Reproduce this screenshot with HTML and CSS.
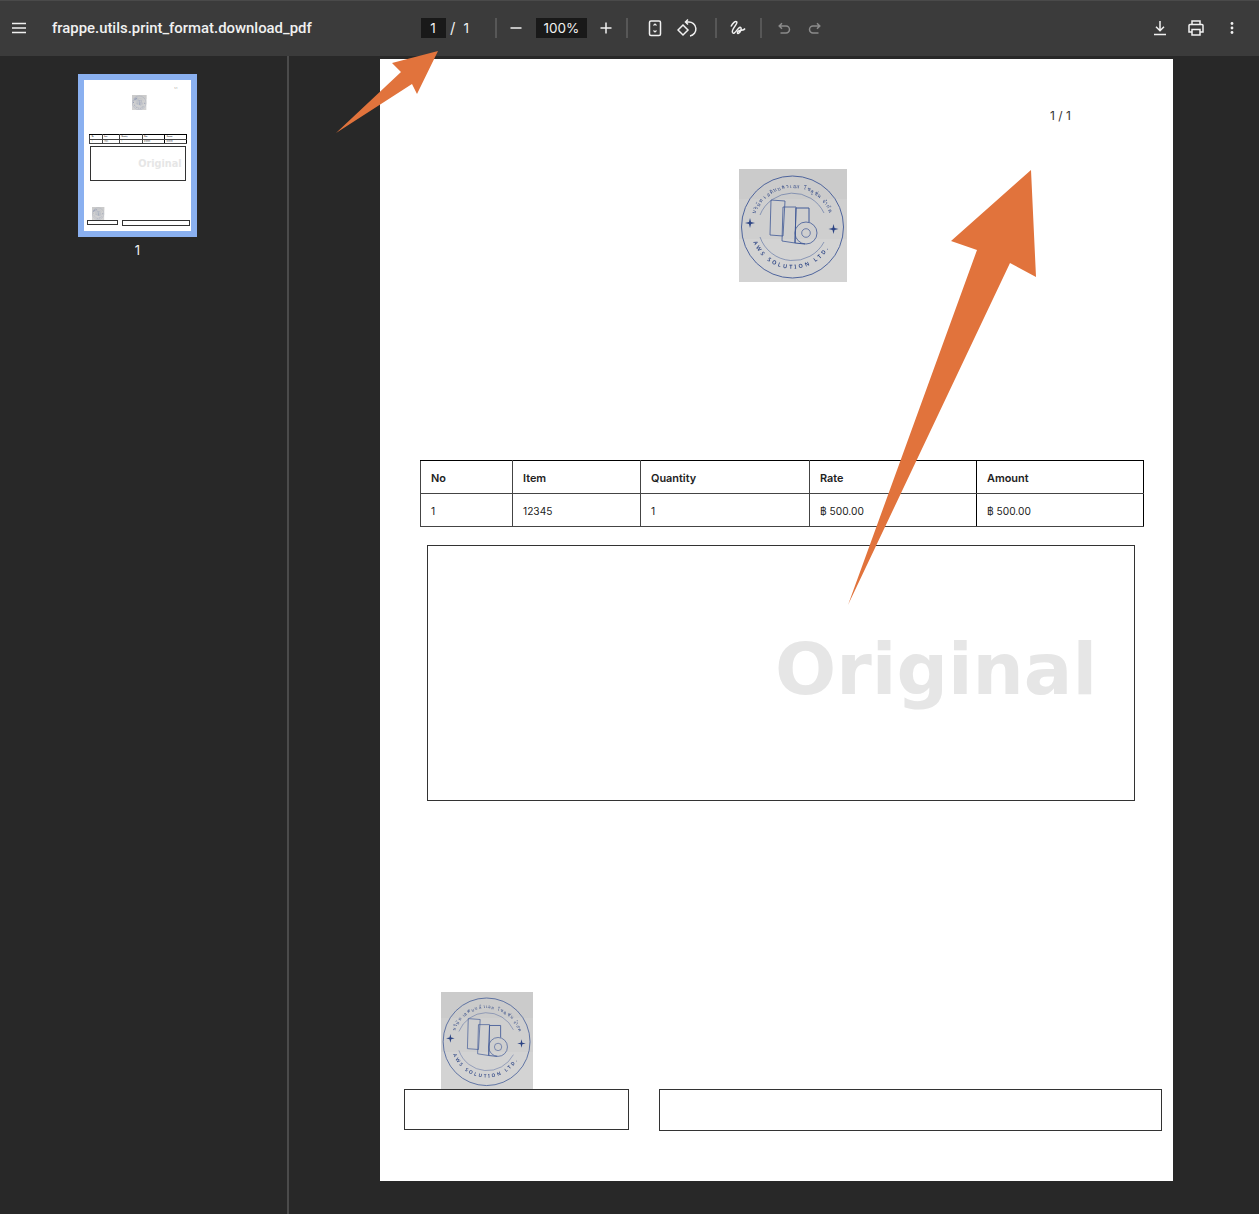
FILE: index.html
```html
<!DOCTYPE html>
<html>

<head>
    <title>frappe.utils.print_format.download_pdf</title>
    <link rel="stylesheet" href="styles.css">
</head>

<body>
    <svg class="defs">
        <symbol id="stamp" viewBox="0 0 108 113" preserveAspectRatio="none">
            <rect width="108" height="113" fill="#d3d3d3"></rect>
            <rect width="108" height="70" fill="#cfcfcf"></rect>
            <rect width="108" height="30" fill="#cbcbcb"></rect>
            <g fill="none" stroke="#3f5896">
                <circle cx="53.500" cy="58" r="51" stroke-width="0.9"></circle>
                <path d="M21 46 A35 35 0 0 1 85 44" stroke-width="0.5"></path>
                <path d="M21 68 A35 35 0 0 0 85 73" stroke-width="0.5"></path>
                <path d="M32 31 L46 32 L44 67 L31 66 Z" stroke-width="0.8"></path>
                <path d="M44 38 L57 38 L56 74 L43 72 Z" stroke-width="0.8"></path>
                <path d="M57 39 L70 39 L70 53 M57 39 L56 74 L66 75" stroke-width="1"></path>
                <circle cx="67" cy="64" r="11" stroke-width="0.8"></circle>
                <circle cx="67" cy="64" r="4.300" stroke-width="0.7"></circle>
            </g>
            <path d="M11 49 L12 53 L16 54 L12 55 L11 59 L10 55 L6 54 L10 53 Z" fill="#2c4484"></path>
            <path d="M94.500 55 L95.500 59 L99.500 60 L95.500 61 L94.500 65 L93.500 61 L89.500 60 L93.500 59 Z" fill="#2c4484"></path>
            <path id="stampTop" d="M16 46 A39.500 39.500 0 0 1 91 46" fill="none"></path>
            <path id="stampBottom" d="M14 72 A42 42 0 0 0 93 72" fill="none"></path>
            <text class="stamp-text"><textPath href="#stampTop" startOffset="1">บริษัท เอดับบลิวเอส โซลูชั่น จำกัด</textPath></text>
            <text class="stamp-text stamp-latin"><textPath href="#stampBottom" startOffset="1">AWS SOLUTION LTD.</textPath></text>
        </symbol>
    </svg>

    <div class="toolbar">
        <div class="tb-left">
            <svg class="icon" viewBox="0 0 20 20"><path d="M3 5.500h14M3 10h14M3 14.500h14"></path></svg>
            <span class="doc-title">frappe.utils.print_format.download_pdf</span>
        </div>
        <div class="tb-center">
            <span class="num-box page-box">1</span>
            <span class="slash">/</span>
            <span class="page-total">1</span>
            <span class="sep sep-a"></span>
            <svg class="icon" viewBox="0 0 20 20"><path d="M4.500 10h11"></path></svg>
            <span class="num-box zoom-box">100%</span>
            <svg class="icon" viewBox="0 0 20 20"><path d="M4.500 10h11M10 4.500v11"></path></svg>
            <span class="sep sep-b"></span>
            <svg class="icon fit" viewBox="0 0 20 20"><rect x="4.500" y="3" width="11" height="14.500" rx="1.500"></rect><path class="thin" d="M8.500 7.500 10 6l1.500 1.500M8.500 12.500 10 14l1.500-1.500"></path></svg>
            <svg class="icon rotate" viewBox="0 0 20 20"><path d="M6 7 1 12l5 5 5-5Z"></path><path d="M8.500 4h3a7 7 0 0 1 1.500 13.900M11 1.500 8.500 4 11 6.500"></path></svg>
            <span class="sep sep-c"></span>
            <svg class="icon draw" viewBox="0 0 20 20"><path d="M3 8.500C4.500 5 7.500 2.500 8.800 4 10 6 3 11 4.500 14.500 6 17.500 9.500 10.500 11.500 9.500 14 8.500 13.500 13 11 15 9.500 16.500 8.500 14 10.500 13 13 11.500 15.500 13 17 10.500"></path></svg>
            <span class="sep sep-d"></span>
            <svg class="icon muted undo" viewBox="0 0 20 20"><path d="M5.500 8h6.500a3.500 3.500 0 0 1 0 7H6.500M8 5.200 5.200 8 8 10.800"></path></svg>
            <svg class="icon muted" viewBox="0 0 20 20"><path d="M14.500 8H8a3.500 3.500 0 0 0 0 7h5.500M12 5.200 14.800 8 12 10.800"></path></svg>
        </div>
        <div class="tb-right">
            <svg class="icon" viewBox="0 0 20 20"><path d="M10 3v9.500M6 8.800l4 4 4-4M4 16.500h12"></path></svg>
            <svg class="icon" viewBox="0 0 20 20"><path d="M6 6.500V3h8v3.500M6 14H3V7.500a1 1 0 0 1 1-1h12a1 1 0 0 1 1 1V14h-3M6 11.500h8V17H6Z"></path></svg>
            <svg class="icon dots" viewBox="0 0 20 20"><circle cx="10" cy="5.500" r="1.400"></circle><circle cx="10" cy="10" r="1.400"></circle><circle cx="10" cy="14.500" r="1.400"></circle></svg>
        </div>
    </div>

    <div class="main">
        <div class="sidebar">
            <div class="thumb-frame">
                <div class="page thumb-page">
                    <div class="page-num">1 / 1</div>
                    <svg class="stamp stamp-lg"><use href="#stamp"></use></svg>
                    <table class="items">
                        <tr><th class="c-no">No</th><th class="c-item">Item</th><th class="c-qty">Quantity</th><th class="c-rate">Rate</th><th>Amount</th></tr>
                        <tr><td>1</td><td>12345</td><td>1</td><td>฿ 500.00</td><td>฿ 500.00</td></tr>
                    </table>
                    <div class="copy-box"><span class="copy-mark">Original</span></div>
                    <svg class="stamp stamp-sm"><use href="#stamp"></use></svg>
                    <div class="sign-row"><div class="sign-box"></div><div class="sign-box sign-wide"></div></div>
                </div>
            </div>
            <div class="thumb-label">1</div>
        </div>

        <div class="viewer">
            <div class="page">
                <div class="page-num">1 / 1</div>
                <svg class="stamp stamp-lg"><use href="#stamp"></use></svg>
                <table class="items">
                    <tr><th class="c-no">No</th><th class="c-item">Item</th><th class="c-qty">Quantity</th><th class="c-rate">Rate</th><th>Amount</th></tr>
                    <tr><td>1</td><td>12345</td><td>1</td><td>฿ 500.00</td><td>฿ 500.00</td></tr>
                </table>
                <div class="copy-box"><span class="copy-mark">Original</span></div>
                <svg class="stamp stamp-sm"><use href="#stamp"></use></svg>
                <div class="sign-row"><div class="sign-box"></div><div class="sign-box sign-wide"></div></div>
            </div>
        </div>
    </div>

    <svg class="arrows" viewBox="0 0 1259 1214">
        <polygon points="438,51 392,63 401,72 336,133 412,84 417,94"></polygon>
        <polygon points="1031,170 951,241 977,250 848,605 1010,263 1036,277"></polygon>
    </svg>
</body>

</html>
```

FILE: styles.css
```css
* {
    box-sizing: border-box;
}

body {
    margin: 0;
    height: 1214px;
    overflow: hidden;
    position: relative;
    background-color: #282828;
    font-family: "Inter", sans-serif;
    color: #fff;
}

.defs {
    display: none;
}

.toolbar {
    height: 56px;
    background-color: #3b3b3b;
    border-top: 1px solid #4a4a4a;
    padding-bottom: 2px;
    display: flex;
    align-items: center;
    position: relative;
}

.tb-left {
    width: 421px;
    display: flex;
    align-items: center;
    padding-left: 9px;
    gap: 23px;
}

.doc-title {
    font-family: "Roboto", sans-serif;
    font-size: 14.900px;
    font-weight: 500;
    white-space: nowrap;
    color: #f1f1f1;
}

.tb-center {
    display: flex;
    align-items: center;
}

.tb-right {
    margin-left: auto;
    padding-right: 17px;
    display: flex;
    gap: 16px;
}

.icon {
    width: 20px;
    height: 20px;
    fill: none;
    stroke: #f1f1f1;
    stroke-width: 1.500;
    flex: none;
}

.icon .thin {
    stroke-width: 1.100;
}

.icon.muted {
    stroke: #8b8b8b;
}

.icon.dots {
    fill: #f1f1f1;
    stroke: none;
}

.icon.fit {
    margin-left: 17px;
}

.icon.rotate {
    margin-left: 12px;
}

.icon.draw {
    margin-left: 11px;
}

.icon.undo {
    margin-left: 12px;
    margin-right: 11px;
}

.num-box {
    background-color: #191919;
    height: 20px;
    display: flex;
    align-items: center;
    justify-content: center;
    font-size: 13.500px;
    color: #f1f1f1;
}

.page-box {
    width: 25px;
    padding-right: 1px;
}

.zoom-box {
    width: 51px;
    margin: 0 9px 0 10px;
}

.slash {
    margin-left: 4px;
    font-size: 15px;
    color: #f1f1f1;
}

.page-total {
    margin-left: 8px;
    font-size: 13.500px;
    color: #f1f1f1;
}

.sep {
    width: 2px;
    height: 20px;
    background-color: #575757;
    flex: none;
}

.sep-a {
    margin-left: 26px;
    margin-right: 9px;
}

.sep-b {
    margin-left: 10px;
}

.sep-c {
    margin-left: 18px;
}

.sep-d {
    margin-left: 12px;
}

.main {
    display: flex;
    height: 1158px;
}

.sidebar {
    width: 289px;
    flex: none;
    border-right: 2px solid #4b4b4b;
    padding: 18px 0 0 78px;
}

.thumb-frame {
    width: 119px;
    height: 163px;
    border: 6px solid #8ab0f0;
    overflow: hidden;
}

.thumb-page {
    zoom: 0.135;
}

.thumb-label {
    width: 119px;
    margin-top: 5px;
    text-align: center;
    font-size: 13px;
    color: #f1f1f1;
}

.viewer {
    flex: 1;
    padding: 3px 0 0 91px;
}

.page {
    width: 793px;
    height: 1122px;
    background-color: #fff;
    color: #000;
    overflow: hidden;
    padding-top: 49px;
}

.page-num {
    height: 15px;
    line-height: 15px;
    margin-left: 670px;
    font-size: 12px;
    font-family: "Inter", sans-serif;
    color: #333;
}

.stamp {
    display: block;
    filter: blur(0.3px);
}

.stamp-lg {
    width: 108px;
    height: 113px;
    margin: 46px 0 0 359px;
}

.stamp-sm {
    width: 92px;
    height: 97px;
    margin: 191px 0 0 61px;
}

.stamp-text {
    font-family: "Noto Sans", "DejaVu Sans", sans-serif;
    font-size: 5px;
    fill: #2c4484;
    letter-spacing: 1px;
}

.stamp-latin {
    font-size: 5.500px;
    font-weight: 600;
    letter-spacing: 2.400px;
}

.items {
    width: 724px;
    margin: 178px 0 0 40px;
    border-collapse: collapse;
    table-layout: fixed;
    font-size: 10.200px;
}

.items th,
.items td {
    height: 33px;
    border: 1px solid #000;
    padding: 1px 10px 0;
    text-align: left;
    color: #222;
}

.items th {
    font-weight: 600;
    font-size: 10.900px;
    border-bottom-color: #444;
}

.items td {
    border-bottom-color: #444;
}

.items tr > :first-child,
.items tr > :nth-child(2),
.items tr > :nth-child(3) {
    border-left-color: #444;
    border-right-color: #444;
}

.c-no {
    width: 92px;
}

.c-item {
    width: 128px;
}

.c-qty {
    width: 169px;
}

.c-rate {
    width: 167px;
}

.copy-box {
    width: 708px;
    height: 256px;
    margin: 18px 0 0 47px;
    border: 1px solid #333;
    padding: 77px 0 0 347px;
}

.copy-mark {
    font-family: "DejaVu Sans", sans-serif;
    font-weight: 700;
    font-size: 72px;
    line-height: 92px;
    color: #e6e6e6;
}

.sign-row {
    display: flex;
    margin-left: 24px;
    gap: 30px;
    align-items: flex-start;
}

.sign-box {
    width: 225px;
    height: 41px;
    border: 1px solid #333;
}

.sign-wide {
    width: 503px;
    height: 42px;
}

.arrows {
    position: absolute;
    left: 0;
    top: 0;
    width: 1259px;
    height: 1214px;
    fill: #e1733c;
}
```
